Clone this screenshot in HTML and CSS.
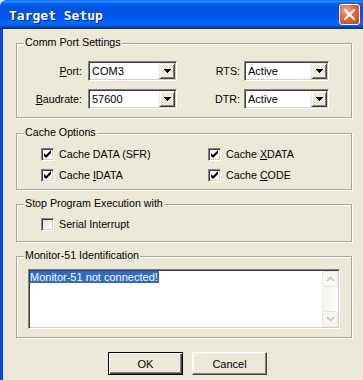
FILE: index.html
```html
<!DOCTYPE html>
<html>
<head>
<meta charset="utf-8">
<link rel="stylesheet" href="styles.css">
</head>
<body>
<div class="window">
  <div class="titlebar">
    <span class="title">Target Setup</span>
    <span class="close">
      <svg width="21" height="21" viewBox="0 0 21 21"><path d="M6 6 L15 15 M15 6 L6 15" stroke="#fff" stroke-width="2.2" stroke-linecap="square"/></svg>
    </span>
  </div>
  <div class="body">
    <div class="group g-comm">
      <span class="legend">Comm Port Settings</span>
      <div class="comm-grid">
        <span class="lbl"><u>P</u>ort:</span>
        <div class="combo"><span class="val">COM3</span><span class="drop"><svg width="7" height="4" viewBox="0 0 7 4"><path d="M0 0h7v1h-1v1h-1v1h-1v1h-1v-1h-1v-1h-1v-1h-1z" fill="#000"/></svg></span></div>
        <span class="lbl lbl2">RTS:</span>
        <div class="combo"><span class="val">Active</span><span class="drop"><svg width="7" height="4" viewBox="0 0 7 4"><path d="M0 0h7v1h-1v1h-1v1h-1v1h-1v-1h-1v-1h-1v-1h-1z" fill="#000"/></svg></span></div>
        <span class="lbl"><u>B</u>audrate:</span>
        <div class="combo"><span class="val">57600</span><span class="drop"><svg width="7" height="4" viewBox="0 0 7 4"><path d="M0 0h7v1h-1v1h-1v1h-1v1h-1v-1h-1v-1h-1v-1h-1z" fill="#000"/></svg></span></div>
        <span class="lbl lbl2">DTR:</span>
        <div class="combo"><span class="val">Active</span><span class="drop"><svg width="7" height="4" viewBox="0 0 7 4"><path d="M0 0h7v1h-1v1h-1v1h-1v1h-1v-1h-1v-1h-1v-1h-1z" fill="#000"/></svg></span></div>
      </div>
    </div>

    <div class="group g-cache">
      <span class="legend">Cache Options</span>
      <div class="cache-grid">
        <div class="check"><span class="box"><svg width="9" height="9" viewBox="0 0 9 9"><path d="M1 3v3l2 2l5-5v-3l-5 5z" fill="#000"/></svg></span><span>Cache DATA (SFR)</span></div>
        <div class="check"><span class="box"><svg width="9" height="9" viewBox="0 0 9 9"><path d="M1 3v3l2 2l5-5v-3l-5 5z" fill="#000"/></svg></span><span>Cache <u>X</u>DATA</span></div>
        <div class="check"><span class="box"><svg width="9" height="9" viewBox="0 0 9 9"><path d="M1 3v3l2 2l5-5v-3l-5 5z" fill="#000"/></svg></span><span>Cache <u>I</u>DATA</span></div>
        <div class="check"><span class="box"><svg width="9" height="9" viewBox="0 0 9 9"><path d="M1 3v3l2 2l5-5v-3l-5 5z" fill="#000"/></svg></span><span>Cache <u>C</u>ODE</span></div>
      </div>
    </div>

    <div class="group g-stop">
      <span class="legend">Stop Program Execution with</span>
      <div class="check"><span class="box unchecked"></span><span>Serial Interrupt</span></div>
    </div>

    <div class="group g-mon">
      <span class="legend">Monitor-51 Identification</span>
      <div class="edit">
        <div class="edit-text"><span class="sel">Monitor-51 not connected!</span></div>
        <div class="vscroll">
          <span class="sbtn"><svg width="9" height="6" viewBox="0 0 9 6"><path d="M1 5 L4.5 1.5 L8 5" fill="none" stroke="#C9C7BA" stroke-width="1.6"/></svg></span>
          <span class="track"></span>
          <span class="sbtn"><svg width="9" height="6" viewBox="0 0 9 6"><path d="M1 1 L4.5 4.5 L8 1" fill="none" stroke="#C9C7BA" stroke-width="1.6"/></svg></span>
        </div>
      </div>
    </div>

    <div class="buttons">
      <button class="btn default">OK</button>
      <button class="btn">Cancel</button>
    </div>
  </div>
</div>
</body>
</html>
```

FILE: styles.css
```css
html, body {
  margin: 0;
  padding: 0;
  overflow: hidden;
  background: #ECE9D8;
}
.window {
  width: 363px;
  height: 380px;
  display: flex;
  flex-direction: column;
  font-family: "Liberation Sans", Arial, sans-serif;
  font-size: 10.7px;
  color: #000;
}
.titlebar {
  height: 29px;
  flex: none;
  display: flex;
  align-items: center;
  justify-content: space-between;
  padding: 0 3px 0 9px;
  border-top-left-radius: 6px;
  background: linear-gradient(to bottom, #0058ee 0%, #3593ff 4%, #288eff 6%, #127dff 8%, #036ffc 10%, #0262ee 14%, #0057e5 20%, #0054e3 24%, #0055eb 56%, #005bf5 66%, #026afe 76%, #0062ef 86%, #0052d6 92%, #0040ab 94%, #003092 100%);
}
.title {
  font-family: "DejaVu Sans Mono", monospace;
  font-weight: bold;
  font-size: 13px;
  color: #fff;
  text-shadow: 1px 1px #0a1883;
  padding-top: 1px;
}
.close {
  width: 21px;
  height: 21px;
  box-sizing: border-box;
  border: 1px solid #fff;
  border-radius: 3px;
  background: radial-gradient(circle at 35% 30%, #f0a88c 0%, #e4643e 45%, #c8401e 100%);
  display: flex;
  align-items: center;
  justify-content: center;
  margin-top: -1px;
}
.close svg { margin: -1px; }
.body {
  flex: 1;
  border-left: 3px solid #0a47d8;
  padding-top: 14px;
  padding-left: 13px;
  display: flex;
  flex-direction: column;
  align-items: flex-start;
}
.group {
  position: relative;
  width: 336px;
  box-sizing: border-box;
  border: 1px solid #ACA899;
  box-shadow: inset 1px 1px #fff, 1px 1px #fff;
}
.legend {
  position: absolute;
  top: -8px;
  left: 7px;
  padding: 0 1px;
  line-height: 13px;
  background: #ECE9D8;
  white-space: nowrap;
}
.g-comm { padding: 17px 0 8px 0; }
.g-cache { margin-top: 15px; padding: 14px 0 7px 24px; }
.g-stop { margin-top: 14px; padding: 13px 0 10px 24px; }
.g-mon { margin-top: 14px; padding: 12px 11px 8px 11px; }

.comm-grid {
  display: grid;
  grid-template-columns: 71px 89px 67px 85px;
  row-gap: 8px;
  align-items: center;
}
.lbl {
  text-align: right;
  padding-right: 6px;
}
.lbl2 { padding-right: 4px; }
.combo {
  height: 20px;
  box-sizing: border-box;
  border: 1px solid;
  border-color: #808080 #fff #fff #808080;
  box-shadow: inset 1px 1px #404040, inset -1px -1px #D4D0C8;
  padding: 1px;
  background: #fff;
  display: flex;
  align-items: center;
}
.val {
  flex: 1;
  padding-left: 2px;
  font-size: 11px;
}
.drop {
  width: 16px;
  height: 16px;
  box-sizing: border-box;
  background: #ECE9D8;
  border: 1px solid;
  border-color: #ECE9D8 #404040 #404040 #ECE9D8;
  box-shadow: inset 1px 1px #fff, inset -1px -1px #808080;
  display: flex;
  align-items: center;
  justify-content: center;
}
.drop svg { display: block; }

.cache-grid {
  display: grid;
  grid-template-columns: 167px auto;
  row-gap: 8px;
}
.check {
  display: flex;
  align-items: center;
  gap: 5px;
  height: 13px;
  line-height: 13px;
}
.box {
  width: 13px;
  height: 13px;
  box-sizing: border-box;
  border: 1px solid;
  border-color: #808080 #fff #fff #808080;
  box-shadow: inset 1px 1px #404040, inset -1px -1px #D4D0C8;
  background: #fff;
  display: flex;
  align-items: center;
  justify-content: center;
  flex: none;
}
.box svg { display: block; }
.box.unchecked {
  background: linear-gradient(135deg, #DCDBD3 0%, #F4F3EE 60%, #fff 100%);
}

.edit {
  height: 60px;
  box-sizing: border-box;
  border: 1px solid;
  border-color: #808080 #fff #fff #808080;
  box-shadow: inset 1px 1px #404040, inset -1px -1px #D4D0C8;
  padding: 1px;
  background: #fff;
  display: flex;
}
.edit-text {
  flex: 1;
  line-height: 13px;
  font-size: 11px;
}
.sel {
  background: #316AC5;
  color: #fff;
  padding: 0 1px 0 0;
}
.vscroll {
  width: 16px;
  display: flex;
  flex-direction: column;
  background: linear-gradient(to right, #F3F1EC, #FEFEFB);
}
.sbtn {
  height: 16px;
  box-sizing: border-box;
  border: 1px solid #E8E6DD;
  border-radius: 2px;
  background: #F7F7F4;
  display: flex;
  align-items: center;
  justify-content: center;
}
.track { flex: 1; }

.buttons {
  margin-top: 14px;
  padding-left: 92px;
  display: flex;
  gap: 9px;
}
.btn {
  width: 75px;
  height: 23px;
  box-sizing: border-box;
  margin: 0;
  padding: 0;
  font-family: "Liberation Sans", Arial, sans-serif;
  font-size: 11px;
  color: #000;
  background: #ECE9D8;
  border: 1px solid;
  border-color: #fff #404040 #404040 #fff;
  box-shadow: inset -1px -1px #808080, inset 1px 1px #F4F3EE;
}
.btn.default {
  border: 1px solid #000;
  box-shadow: inset 1px 1px #fff, inset -1px -1px #404040, inset -2px -2px #808080;
}
```
